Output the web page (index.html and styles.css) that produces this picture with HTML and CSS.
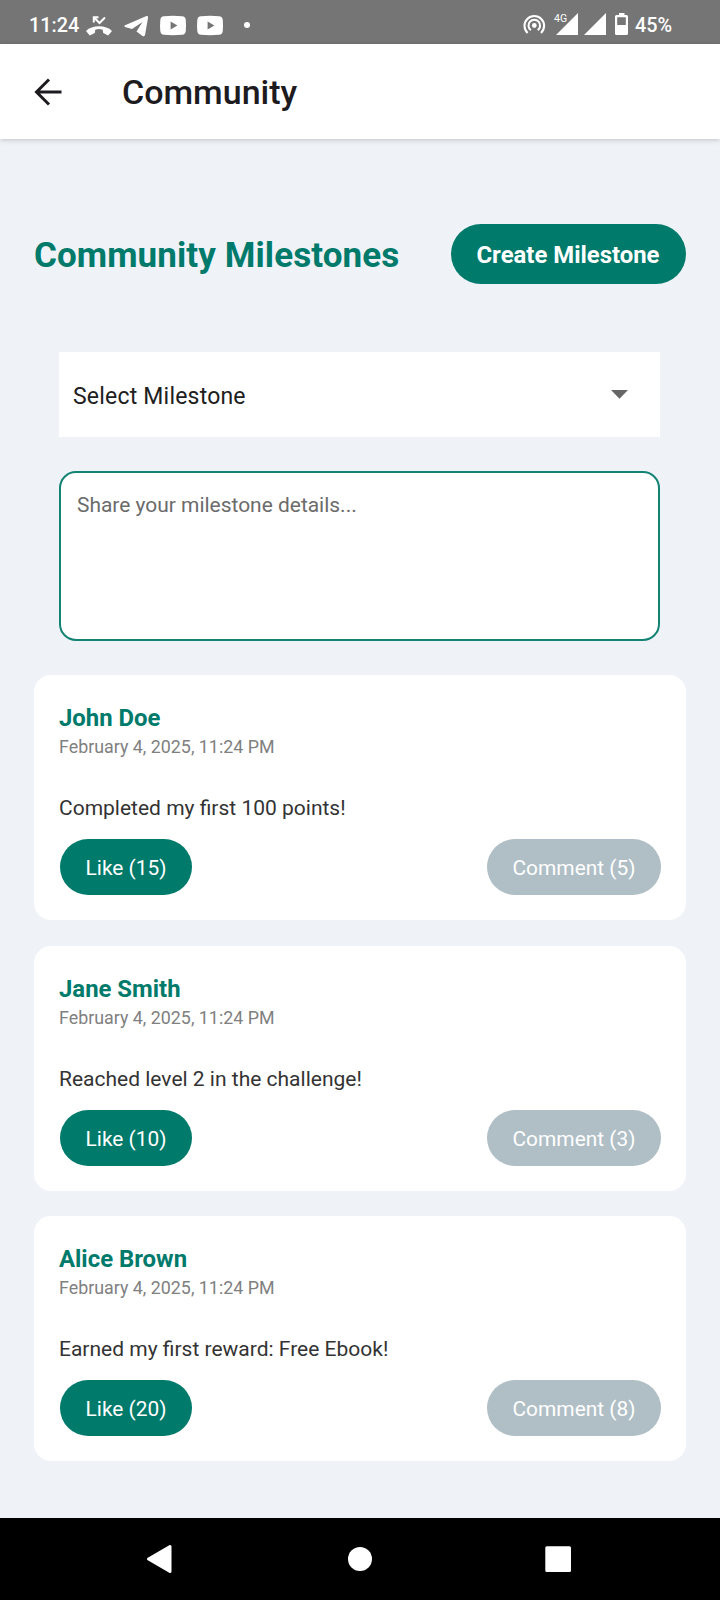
FILE: index.html
```html
<!DOCTYPE html>
<html lang="en">
<head>
<meta charset="utf-8">
<title>Community</title>
<link rel="stylesheet" href="styles.css">
</head>
<body>
<div class="screen">
  <div class="status">
    <span class="clock">11:24</span>
    <svg class="status-icons" width="180" height="44" viewBox="80 0 180 44" fill="#fff">
      <path d="M86 31 C92 24.800 106 24.800 112 31 L108.200 35.500 L103.200 33 L102.700 29.700 C100 28.800 98 28.800 95.300 29.700 L94.800 33 L89.800 35.500 Z"/>
      <path d="M93.800 22.500V17.300H98.500M94.300 17.800L99.500 23L105 17.500" fill="none" stroke="#fff" stroke-width="2"/>
      <path d="M124.500 25.500L146.500 16Q148.500 15.500 148 18L145 35Q144.300 37 142.500 36L136.500 31.500L142.500 22L132 29L125 27Q124 26 124.500 25.500Z"/>
      <path fill-rule="evenodd" d="M164 16.200Q173 15.500 182 16.200Q185.500 16.500 185.800 20Q186.200 25.500 185.800 31Q185.500 34.500 182 34.800Q173 35.500 164 34.800Q160.600 34.500 160.300 31Q159.800 25.500 160.300 20Q160.600 16.500 164 16.200ZM170.600 21.600V29.400L177.400 25.500Z"/>
      <path fill-rule="evenodd" transform="translate(37 0)" d="M164 16.200Q173 15.500 182 16.200Q185.500 16.500 185.800 20Q186.200 25.500 185.800 31Q185.500 34.500 182 34.800Q173 35.500 164 34.800Q160.600 34.500 160.300 31Q159.800 25.500 160.300 20Q160.600 16.500 164 16.200ZM170.600 21.600V29.400L177.400 25.500Z"/>
      <circle cx="247" cy="25" r="3"/>
    </svg>
    <svg class="status-right" width="110" height="44" viewBox="520 0 110 44" fill="#fff">
      <circle cx="534.300" cy="25.500" r="2.400"/>
      <g fill="none" stroke="#fff" stroke-width="2.100">
        <path d="M530.900 30.200A5.800 5.800 0 1 1 537.700 30.200"/>
        <path d="M527.600 33A9.800 9.800 0 1 1 541 33"/>
      </g>
      <path d="M578 13V35H556Z"/>
      <path d="M606 13V35H584Z"/>
      <path fill-rule="evenodd" d="M619 13H624.500V15H626.500Q628 15 628 16.500V33.500Q628 35 626.500 35H616.500Q615 35 615 33.500V16.500Q615 15 616.500 15H619ZM617.200 17.300V25H625.800V17.300Z"/>
      <text class="network" x="554" y="22">4G</text>
    </svg>
    <span class="battery">45%</span>
  </div>

  <header class="appbar">
    <svg width="28" height="28" viewBox="0 0 28 28" fill="none" stroke="#1d1b20" stroke-width="3"><path d="M27.500 14H3M15 1.500L2.500 14L15 26.500"/></svg>
    <h1 class="title">Community</h1>
  </header>

  <main class="content">
    <div class="heading-row">
      <h2 class="heading">Community Milestones</h2>
      <button class="create">Create Milestone</button>
    </div>
    <div class="form">
      <div class="select">
        <span class="select-label">Select Milestone</span>
        <svg width="17" height="9" viewBox="0 0 17 9"><path d="M0 0H17L8.500 8.700Z" fill="#666"/></svg>
      </div>
      <div class="details">Share your milestone details...</div>
    </div>
    <section class="cards">
      <article class="card">
        <h3 class="name">John Doe</h3>
        <p class="date">February 4, 2025, 11:24 PM</p>
        <p class="text">Completed my first 100 points!</p>
        <div class="actions"><button class="pill like">Like (15)</button><button class="pill comment">Comment (5)</button></div>
      </article>
      <article class="card">
        <h3 class="name">Jane Smith</h3>
        <p class="date">February 4, 2025, 11:24 PM</p>
        <p class="text">Reached level 2 in the challenge!</p>
        <div class="actions"><button class="pill like">Like (10)</button><button class="pill comment">Comment (3)</button></div>
      </article>
      <article class="card">
        <h3 class="name">Alice Brown</h3>
        <p class="date">February 4, 2025, 11:24 PM</p>
        <p class="text">Earned my first reward: Free Ebook!</p>
        <div class="actions"><button class="pill like">Like (20)</button><button class="pill comment">Comment (8)</button></div>
      </article>
    </section>
  </main>

  <nav class="navbar">
    <svg width="720" height="82" viewBox="0 0 720 82" fill="#fff">
      <path d="M148.500 41L170 28.600V53.400Z" stroke="#fff" stroke-width="3" stroke-linejoin="round"/>
      <circle cx="360" cy="41" r="12"/>
      <rect x="545.300" y="28.200" width="25.700" height="25.700" rx="1.500"/>
    </svg>
  </nav>
</div>
</body>
</html>
```
FILE: styles.css
```css
* { box-sizing: border-box; margin: 0; padding: 0; }
body { font-family: Roboto, "Liberation Sans", sans-serif; background: #eff3f8; }
button { border: 0; font-family: inherit; white-space: nowrap; }
svg { display: block; flex: none; }
.screen { width: 720px; height: 1600px; display: flex; flex-direction: column; overflow: hidden; }
.status { height: 44px; flex: none; background: #757575; color: #fff; display: flex; font-size: 19.800px; font-weight: 500; line-height: 51px; white-space: nowrap; }
.clock { width: 80px; padding-left: 29px; }
.status-right { margin-left: 260px; }
.network { font-size: 10.500px; font-weight: 400; }
.battery { padding-left: 5px; }
.appbar { height: 95px; flex: none; background: #fff; display: flex; align-items: center; padding-left: 33.500px; gap: 60.500px; box-shadow: 0 1px 5px rgba(0, 0, 0, .2); position: relative; }
.title { font-size: 34px; font-weight: 500; line-height: 40px; color: #1d1b20; }
.content { flex: 1; padding: 85px 34px 0; }
.heading-row { display: flex; justify-content: space-between; align-items: center; height: 60px; }
.heading { font-size: 35px; letter-spacing: .08px; font-weight: 700; color: #007a6b; white-space: nowrap; padding-top: 2px; }
.create { width: 235px; height: 60px; border-radius: 30px; background: #007a6b; color: #fff; font-size: 23.900px; font-weight: 700; padding: 2px 7px 0 6px; }
.form { padding: 68px 26px 0 25px; }
.select { height: 85px; background: #fff; color: #202020; font-size: 23px; letter-spacing: .2px; display: flex; align-items: center; justify-content: space-between; padding: 0 32.500px 0 14px; }
.select-label { padding-top: 3px; }
.details { margin-top: 34px; height: 170px; border: 2px solid #138374; border-radius: 17px; background: #fff; color: #6b6b6b; font-size: 20.950px; line-height: 25px; padding: 20px 16px; }
.cards { margin-top: 34px; display: flex; flex-direction: column; gap: 25.500px; }
.card { height: 245px; background: #fff; border-radius: 17px; padding: 28px 25px 0; }
.name { font-size: 23.900px; line-height: 30px; font-weight: 700; color: #007a6b; }
.date { font-size: 17.850px; line-height: 22px; color: #808080; margin-top: 3px; }
.text { font-size: 21px; line-height: 26px; color: #333; margin-top: 37px; }
.actions { display: flex; justify-content: space-between; margin: 18px 0 0 1px; }
.pill { height: 56px; border-radius: 28px; font-size: 20.900px; color: #fff; padding-top: 2px; }
.like { width: 132px; background: #007a6b; }
.comment { width: 174px; background: #b0bec5; }
.navbar { height: 82px; flex: none; background: #000; }
```
